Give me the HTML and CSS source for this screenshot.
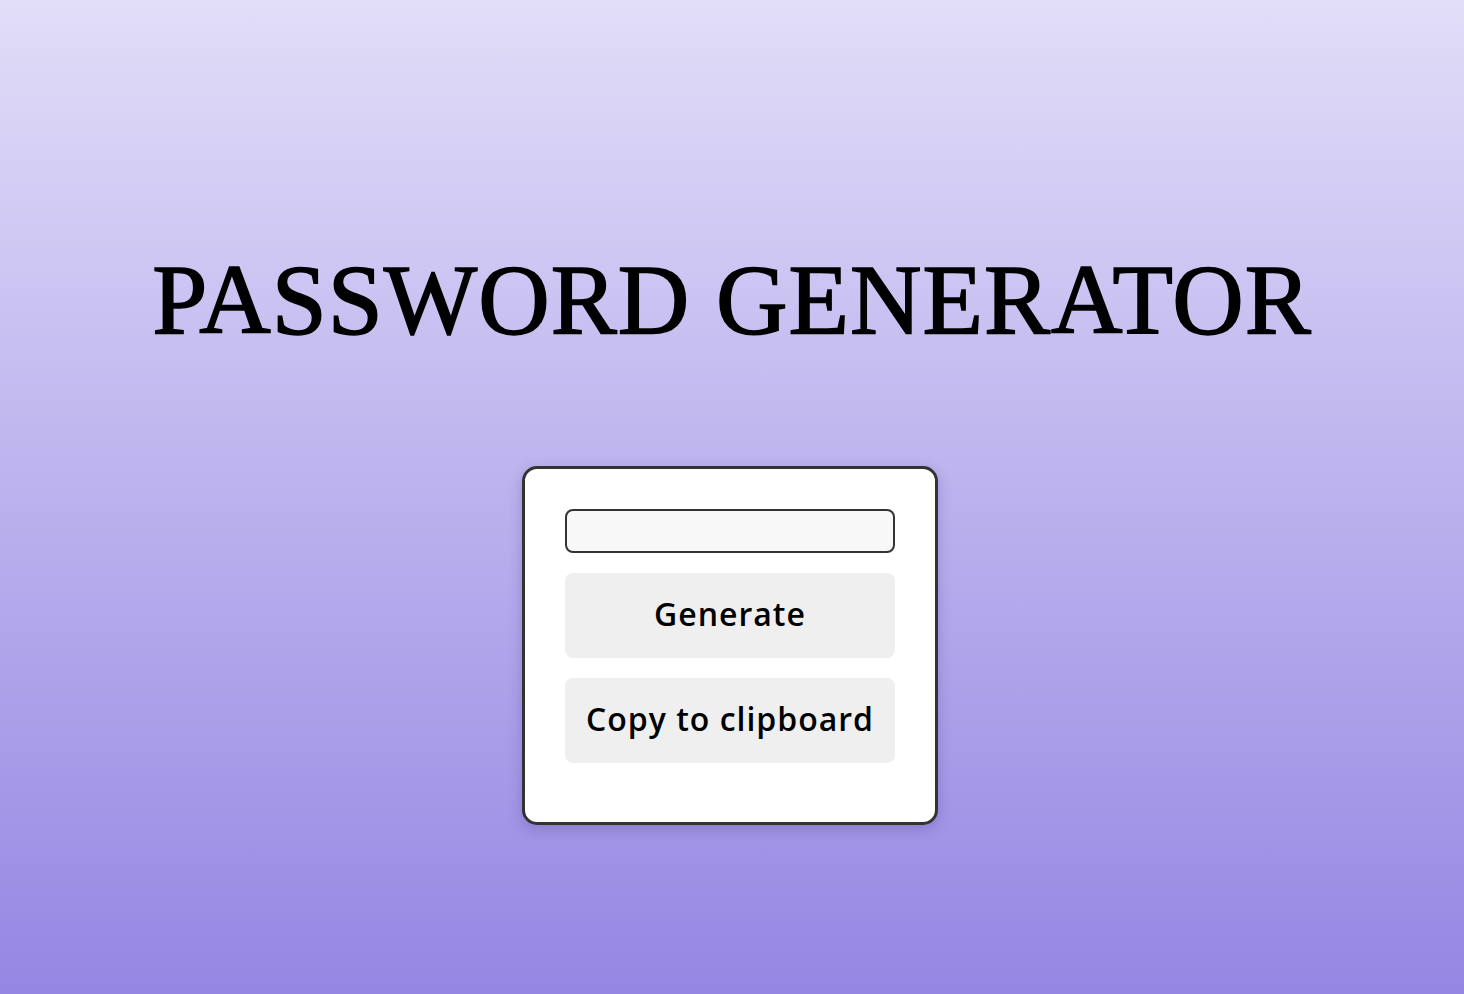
FILE: index.html
```html
<!DOCTYPE html>
<html lang="en">
<head>
<meta charset="utf-8">
<title>Password Generator</title>
<link rel="stylesheet" href="styles.css">
</head>
<body>
<main class="page">
  <h1 class="title">PASSWORD GENERATOR</h1>
  <section class="card">
    <input class="output" type="text" readonly>
    <button class="btn" type="button">Generate</button>
    <button class="btn" type="button">Copy to clipboard</button>
  </section>
</main>
</body>
</html>
```

FILE: styles.css
```css
html, body {
  margin: 0;
  height: 100%;
}
body {
  background: linear-gradient(to bottom, #e2ddf8 0%, #9586e3 100%);
  min-height: 994px;
}
.page {
  display: flex;
  flex-direction: column;
  align-items: center;
  padding-top: 240px;
}
.title {
  margin: 0;
  font-family: "Liberation Serif", "Times New Roman", serif;
  font-weight: normal;
  font-size: 99px;
  letter-spacing: 1px;
  line-height: 120px;
  color: #000;
  -webkit-text-stroke: 1.6px #000;
}
.card {
  margin-top: 106px;
  width: 330px;
  padding: 40px 40px 40px;
  background: #fff;
  border: 3px solid #333;
  border-radius: 15px;
  box-shadow: 0 4px 14px rgba(60, 40, 120, 0.25);
  display: flex;
  flex-direction: column;
  gap: 20px;
  margin-left: -4px;
}
.output {
  box-sizing: border-box;
  width: 330px;
  height: 44px;
  margin: 0;
  border: 2px solid #333;
  border-radius: 8px;
  background: #f8f8f8;
  padding: 0 8px;
}
.btn {
  width: 330px;
  height: 85px;
  border: none;
  border-radius: 8px;
  background: #efefef;
  font-family: "Comic Sans MS", "Open Sans", sans-serif;
  font-size: 32px;
  letter-spacing: 1px;
  font-weight: 600;
  color: #000;
  padding: 0 0 4px;
}
.btn:last-child {
  margin-bottom: 19px;
}
```
